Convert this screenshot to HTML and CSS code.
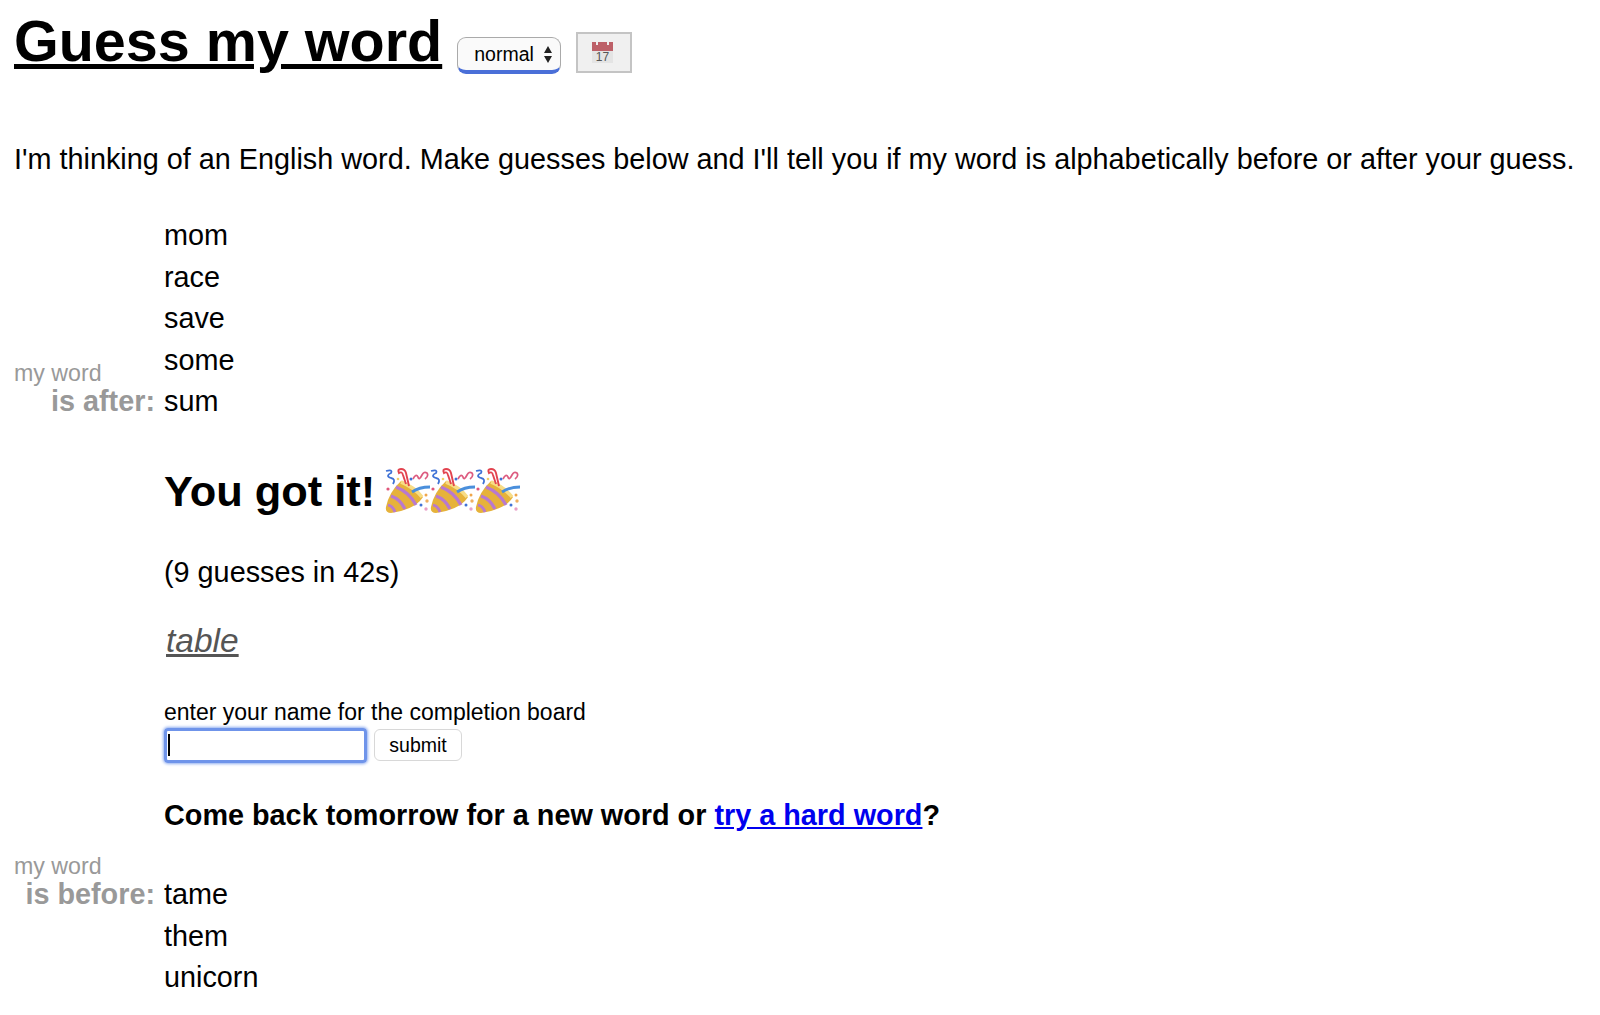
FILE: index.html

```html
<!DOCTYPE html>
<html lang="en">
<head>
  <meta charset="UTF-8">
  <title>Guess my word</title>
  <link rel="stylesheet" href="styles.css">
</head>
<body>
  <svg class="defs" width="0" height="0">
    <symbol id="popper" viewBox="0 0 45 45">
      <path d="M16 13 L38 29 Q31 41 6 45 Q0 45 1 39 Q4 24 16 13Z" fill="#e6b23a"/>
      <path d="M11 19 Q24 24 31 37" fill="none" stroke="#b879cf" stroke-width="3.200"/>
      <path d="M6 28 Q15 31 20 41" fill="none" stroke="#b879cf" stroke-width="3.200"/>
      <path d="M3 37 Q8 38 10 44" fill="none" stroke="#b879cf" stroke-width="2.800"/>
      <path d="M16 14 Q29 19 37 29" fill="none" stroke="#f7dc86" stroke-width="3.500"/>
      <path d="M27 24 Q34 19 45 19" fill="none" stroke="#4a8fdc" stroke-width="2.800"/>
      <path d="M21 16 L18 7 Q17 3 14 5 Q12 1 16 1 Q20 1 21 5 L24 18" fill="none" stroke="#e2434f" stroke-width="1.900"/>
      <path d="M1 3 Q8 1 6 5 Q0 8 6 10 Q11 11 8 16" fill="none" stroke="#3f72d6" stroke-width="1.800"/>
      <path d="M28 11 Q31 5 33 9 Q34 13 37 7 Q39 3 42 5 Q44 8 40 11" fill="none" stroke="#dd5c80" stroke-width="1.700"/>
      <circle cx="26" cy="11" r="1.500" fill="#3f72d6"/>
      <circle cx="41" cy="27" r="1.500" fill="#f0a64a"/>
      <circle cx="36" cy="37" r="1.500" fill="#3f72d6"/>
      <circle cx="42" cy="33" r="1.700" fill="#f0b060"/>
      <circle cx="41" cy="41" r="1.700" fill="#e8a0c8"/>
      <circle cx="3" cy="21" r="1.600" fill="#e0567a"/>
      <circle cx="13" cy="11" r="1.300" fill="#f2cf6a"/>
    </symbol>
  </svg>

  <div class="header">
    <h1><a href="#">Guess my word</a></h1>
    <span class="mode-select">normal
      <svg class="arrows" width="8" height="17" viewBox="0 0 8 17"><path d="M4 0 L8 7 H0Z M4 17 L0 10 H8Z"/></svg>
    </span>
    <button class="calendar" type="button">
      <svg width="21" height="21" viewBox="0 0 21 21">
        <rect x="0" y="0" width="21" height="21" fill="#e4e4e4"/>
        <rect x="0" y="0" width="21" height="9" fill="#bd6068"/>
        <rect x="4" y="0" width="2" height="3" fill="#eee"/>
        <rect x="15" y="0" width="2" height="3" fill="#eee"/>
        <text x="10.500" y="19" text-anchor="middle" class="cal-day">17</text>
      </svg>
    </button>
  </div>

  <p class="intro">I'm thinking of an English word. Make guesses below and I'll tell you if my word is alphabetically before or after your guess.</p>

  <div class="game">
    <div class="row"><div class="side"></div><div class="word">mom</div></div>
    <div class="row"><div class="side"></div><div class="word">race</div></div>
    <div class="row"><div class="side"></div><div class="word">save</div></div>
    <div class="row"><div class="side"></div><div class="word">some</div></div>
    <div class="row">
      <div class="side">
        <div class="side-top">my word</div>
        <b>is after:</b>
      </div>
      <div class="word">sum</div>
    </div>

    <div class="result">
      <h2>You got it!
        <span class="poppers">
          <svg width="45" height="45"><use href="#popper"/></svg><svg width="45" height="45"><use href="#popper"/></svg><svg width="45" height="45"><use href="#popper"/></svg>
        </span>
      </h2>
      <p class="stats">(9 guesses in 42s)</p>
      <p class="answer"><a href="#">table</a></p>
      <div class="name-label">enter your name for the completion board</div>
      <form class="name-form">
        <span class="name-input"><span class="caret"></span></span>
        <button class="submit" type="button">submit</button>
      </form>
      <p class="comeback">Come back tomorrow for a new word or <a href="#">try a hard word</a>?</p>
    </div>

    <div class="row">
      <div class="side">
        <div class="side-top">my word</div>
        <b>is before:</b>
      </div>
      <div class="word">tame</div>
    </div>
    <div class="row"><div class="side"></div><div class="word">them</div></div>
    <div class="row"><div class="side"></div><div class="word">unicorn</div></div>
  </div>
</body>
</html>
```

FILE: styles.css

```css
body {
  font-family: "Liberation Sans", Arial, sans-serif;
  background-color: #fff;
  color: #000;
  margin: 0;
  padding: 0 14px;
}
.defs {
  display: block;
  height: 0;
}
a {
  color: inherit;
}

/* Header */
.header {
  display: flex;
  align-items: flex-start;
  height: 139px;
}
h1 {
  font-size: 57.500px;
  line-height: 66px;
  margin: 8px 15px 0 0;
}
.mode-select {
  display: flex;
  align-items: center;
  justify-content: space-between;
  box-sizing: border-box;
  width: 104px;
  height: 37px;
  margin-top: 37px;
  padding: 1px 8px 0 16px;
  font-size: 19.500px;
  background-color: #fafafa;
  border: 1px solid #aaa;
  border-bottom: 4px solid #4a6fd8;
  border-radius: 9px;
}
.arrows {
  fill: #222;
}
.calendar {
  display: flex;
  align-items: center;
  justify-content: center;
  box-sizing: border-box;
  width: 56px;
  height: 41px;
  margin: 32px 0 0 15px;
  padding: 0 4px 0 0;
  background-color: #f0f0f0;
  border: 2px solid #c4c4c4;
}
.cal-day {
  font-size: 12px;
  fill: #555;
}

.intro {
  font-size: 28.800px;
  line-height: 40px;
  margin: 0 0 36px;
  white-space: nowrap;
}

/* Guess list */
.row {
  display: flex;
  height: 41.400px;
  align-items: flex-end;
}
.side {
  position: relative;
  width: 141px;
  margin-right: 9px;
  text-align: right;
  font-size: 28.800px;
  line-height: 41px;
  color: #999;
  flex: none;
}
.side-top {
  position: absolute;
  left: 0;
  bottom: 35px;
  font-size: 23.200px;
  line-height: 28px;
  text-align: left;
  white-space: nowrap;
}
.word {
  font-size: 28.800px;
  line-height: 41px;
}

/* Result block */
.result {
  margin-left: 150px;
}
h2 {
  display: flex;
  align-items: center;
  gap: 10px;
  font-size: 43.400px;
  line-height: 50px;
  margin: 44px 0 0;
}
.poppers {
  display: flex;
  height: 45px;
}
.stats {
  font-size: 28.800px;
  line-height: 36px;
  margin: 38px 0 0;
}
.answer {
  font-size: 33.500px;
  line-height: 40px;
  font-style: italic;
  color: #555;
  margin: 31px 0 0 2px;
}
.name-label {
  font-size: 23px;
  line-height: 28px;
  margin-top: 37px;
}
.name-form {
  display: flex;
  align-items: center;
  gap: 7px;
  margin-top: 2px;
}
.name-input {
  display: flex;
  align-items: center;
  box-sizing: border-box;
  width: 203px;
  height: 35px;
  padding-left: 1px;
  border: 3px solid #6f94ea;
  border-radius: 4px;
  box-shadow: 0 0 3px 1px #8fadf0;
}
.caret {
  width: 2px;
  height: 22px;
  background-color: #000;
}
.submit {
  box-sizing: border-box;
  width: 88px;
  height: 32px;
  padding: 0;
  font-family: inherit;
  font-size: 19.500px;
  background-color: #fff;
  border: 1px solid #d8d8d8;
  border-radius: 6px;
}
.comeback {
  font-size: 28.800px;
  line-height: 36px;
  font-weight: bold;
  margin: 34px 0 0;
}
.comeback a {
  color: #00e;
}
.result + .row {
  margin-top: 41px;
}
```
